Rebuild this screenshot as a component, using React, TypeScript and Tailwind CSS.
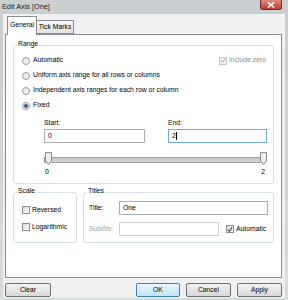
import React from "react";

const font = { fontFamily: '"Liberation Sans", Arial, sans-serif' };

function Radio({ checked }: { checked?: boolean }) {
  return (
    <span className="w-[8px] h-[8px] rounded-full border border-[#9a9a9a] bg-gradient-to-br from-[#e4e4e4] to-[#f8f8f8] flex items-center justify-center shrink-0">
      {checked && <span className="w-[4px] h-[4px] rounded-full bg-[#2f5f9a]" />}
    </span>
  );
}

function Check({ checked, disabled }: { checked?: boolean; disabled?: boolean }) {
  return (
    <span
      className={
        "w-[8px] h-[8px] border flex items-center justify-center shrink-0 " +
        (disabled
          ? "border-[#c4c4c4] bg-[#f4f4f4]"
          : "border-[#8e8f8f] bg-gradient-to-br from-[#dcdcdc] to-[#fbfbfb]")
      }
    >
      {checked && (
        <svg width="7" height="7" viewBox="0 0 7 7">
          <path
            d="M1 3.6 L2.8 5.6 L6 1"
            fill="none"
            stroke={disabled ? "#b5b5b5" : "#3f4c6b"}
            strokeWidth="1.2"
          />
        </svg>
      )}
    </span>
  );
}

function Thumb() {
  return (
    <svg width="7" height="13" viewBox="0 0 7 13" className="shrink-0">
      <path d="M0.5 0.5 H6.5 V9 L3.5 12.5 L0.5 9 Z" fill="#ececec" stroke="#8c8c8c" />
    </svg>
  );
}

function Btn({ children, w, def }: { children: React.ReactNode; w: string; def?: boolean }) {
  return (
    <div
      className={
        "h-[14px] rounded-[2px] border flex items-center justify-center text-black " +
        w +
        (def
          ? " border-[#3c7fb1] bg-gradient-to-b from-[#eaf6fd] to-[#bee6fd]"
          : " border-[#707070] bg-gradient-to-b from-[#f2f2f2] to-[#d8d8d8]")
      }
    >
      {children}
    </div>
  );
}

export default function App() {
  return (
    <div
      className="w-[288px] h-[300px] flex flex-col bg-gradient-to-b from-[#c9cfd0] to-[#d6dbdc] text-[6.8px] leading-none text-black overflow-hidden"
      style={font}
    >
      {/* title bar */}
      <div className="h-[14px] flex items-start shrink-0">
        <div className="pl-[2px] pt-[3px] text-[7.3px] text-[#1e1e1e]">Edit Axis [One]</div>
        <div className="ml-auto mr-[6px] w-[22px] h-[10px] rounded-b-[3px] border border-t-0 border-[#7a2a22] bg-gradient-to-b from-[#e08a7c] to-[#c03a2a] flex items-center justify-center">
          <svg width="8" height="6" viewBox="0 0 8 6">
            <path d="M1 0.5 L7 5.5 M7 0.5 L1 5.5" stroke="#ffffff" strokeWidth="1.6" />
          </svg>
        </div>
      </div>

      {/* body */}
      <div className="flex-1 mx-[3px] mb-[2px] bg-[#f0f0f0] flex flex-col">
        {/* tabs */}
        <div className="flex items-end pl-[4px] mt-[1px] h-[19px] relative z-10">
          <div className="w-[30px] h-[19px] border border-b-0 border-[#898c95] bg-white flex items-center justify-center -mb-[1px] pb-[1px]">
            General
          </div>
          <div className="w-[37px] h-[14px] border border-l-0 border-[#898c95] bg-gradient-to-b from-[#f6f6f6] to-[#e2e2e2] flex items-center justify-center">
            Tick Marks
          </div>
        </div>

        {/* panel */}
        <div className="ml-[2px] w-[277px] h-[244px] border border-[#898c95] bg-white flex flex-col">
          {/* Range group */}
          <div className="ml-[7px] mt-[10px] w-[261px] h-[139px] border border-[#d5dfe5] rounded-[3px] relative flex flex-col">
            <span className="absolute left-[3px] -top-[5px] bg-white px-[1px]">Range</span>
            <div className="pl-[8px] pt-[7px] flex flex-col">
              <div className="h-[15px] flex items-center pr-[7px]">
                <Radio />
                <span className="ml-[3px]">Automatic</span>
                <span className="ml-auto flex items-center text-[#8d8d8d]">
                  <Check checked disabled />
                  <span className="ml-[2px]">Include zero</span>
                </span>
              </div>
              <div className="h-[15px] flex items-center">
                <Radio />
                <span className="ml-[3px]">Uniform axis range for all rows or columns</span>
              </div>
              <div className="h-[15px] flex items-center">
                <Radio />
                <span className="ml-[3px]">Independent axis ranges for each row or column</span>
              </div>
              <div className="h-[15px] flex items-center">
                <Radio checked />
                <span className="ml-[3px]">Fixed</span>
              </div>
            </div>

            <div className="ml-[30px] mt-[7px] grid grid-cols-[101px_99px] gap-x-[23px]">
              <div className="h-[9px]">Start:</div>
              <div className="h-[9px]">End:</div>
              <div className="h-[14px] border border-[#abadb3] bg-white flex items-center pl-[3px]">0</div>
              <div className="h-[14px] border border-[#6fa8dc] bg-white flex items-center pl-[3px]">
                2<span className="w-px h-[8px] bg-black ml-[0.5px]" />
              </div>
            </div>

            {/* slider */}
            <div className="ml-[30px] mt-[9px] w-[223px] h-[13px] flex items-start relative">
              <div className="absolute left-0 right-[1px] top-[5px] h-[6px] border border-[#9c9c9c] bg-gradient-to-b from-[#c4c4c4] to-[#d4d4d4]" />
              <div className="relative flex w-full justify-between pl-[1px]">
                <Thumb />
                <Thumb />
              </div>
            </div>
            <div className="ml-[31px] mt-[4px] w-[220px] flex justify-between">
              <span>0</span>
              <span>2</span>
            </div>
          </div>

          {/* Scale + Titles */}
          <div className="ml-[7px] mt-[8px] flex gap-[6px]">
            <div className="w-[64px] h-[51px] border border-[#d5dfe5] rounded-[3px] relative flex flex-col pl-[8px] pt-[13px] gap-[9px]">
              <span className="absolute left-[3px] -top-[5px] bg-white px-[1px]">Scale</span>
              <div className="flex items-center">
                <Check />
                <span className="ml-[2px]">Reversed</span>
              </div>
              <div className="flex items-center">
                <Check />
                <span className="ml-[2px]">Logarithmic</span>
              </div>
            </div>
            <div className="w-[191px] h-[51px] border border-[#d5dfe5] rounded-[3px] relative flex flex-col pl-[5px] pt-[8px]">
              <span className="absolute left-[3px] -top-[5px] bg-white px-[1px]">Titles</span>
              <div className="flex items-center h-[14px]">
                <span className="w-[30px]">Title:</span>
                <div className="w-[149px] h-[14px] border border-[#abadb3] bg-white flex items-center pl-[3px]">One</div>
              </div>
              <div className="flex items-center h-[14px] mt-[7px]">
                <span className="w-[30px] text-[#a0a0a0]">Subtitle:</span>
                <div className="w-[100px] h-[14px] border border-[#cfd1d6] bg-white" />
                <span className="ml-[7px] flex items-center">
                  <Check checked />
                  <span className="ml-[2px]">Automatic</span>
                </span>
              </div>
            </div>
          </div>
        </div>

        {/* buttons */}
        <div className="mt-[5px] ml-[2px] mr-[3px] flex items-center">
          <Btn w="w-[46px]">Clear</Btn>
          <div className="ml-auto flex gap-[6px]">
            <Btn w="w-[44px]" def>OK</Btn>
            <Btn w="w-[45px]">Cancel</Btn>
            <Btn w="w-[45px]">Apply</Btn>
          </div>
        </div>
      </div>
    </div>
  );
}
